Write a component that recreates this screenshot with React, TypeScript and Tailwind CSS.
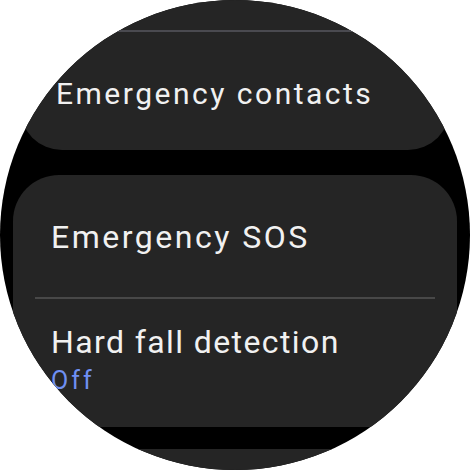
import React from "react";

const font = { fontFamily: "Roboto, 'Noto Sans', sans-serif" };

export default function App() {
    return (
        <div className="w-[470px] h-[470px] bg-white" style={font}>
            <div className="w-full h-full rounded-full bg-black overflow-hidden">
                <div className="flex flex-col items-center -mt-[20px]">
                    {/* Emergency contacts (scaled down, near top edge) */}
                    <div className="w-[430px] bg-[#252525] rounded-[42px] pt-[50px] pb-[38px]">
                        <div className="h-[2px] bg-[#4a4a50]" />
                        <div className="pl-[36px] pt-[44px] text-[30px] leading-[36px] tracking-[2.5px] text-[#f1f1f1]">
                            Emergency contacts
                        </div>
                    </div>

                    {/* Safety card */}
                    <div className="w-[444px] mt-[25px] bg-[#252525] rounded-[46px] pb-[32px]">
                        <div className="pl-[38px] pt-[42px] pb-[40px] text-[32px] leading-[40px] tracking-[2.5px] text-[#f1f1f1]">
                            Emergency SOS
                        </div>
                        <div className="mx-[22px] h-[2px] bg-[#484848]" />
                        <div className="pl-[38px] pt-[23px]">
                            <div className="text-[32px] leading-[40px] tracking-[1.4px] text-[#f1f1f1]">Hard fall detection</div>
                            <div className="mt-[5px] text-[25px] leading-[28px] tracking-[3px] text-[#6f8ff2]">Off</div>
                        </div>
                    </div>

                    <div className="w-[444px] h-[100px] mt-[22px] bg-[#252525] rounded-[46px]" />
                </div>
            </div>
        </div>
    );
}
